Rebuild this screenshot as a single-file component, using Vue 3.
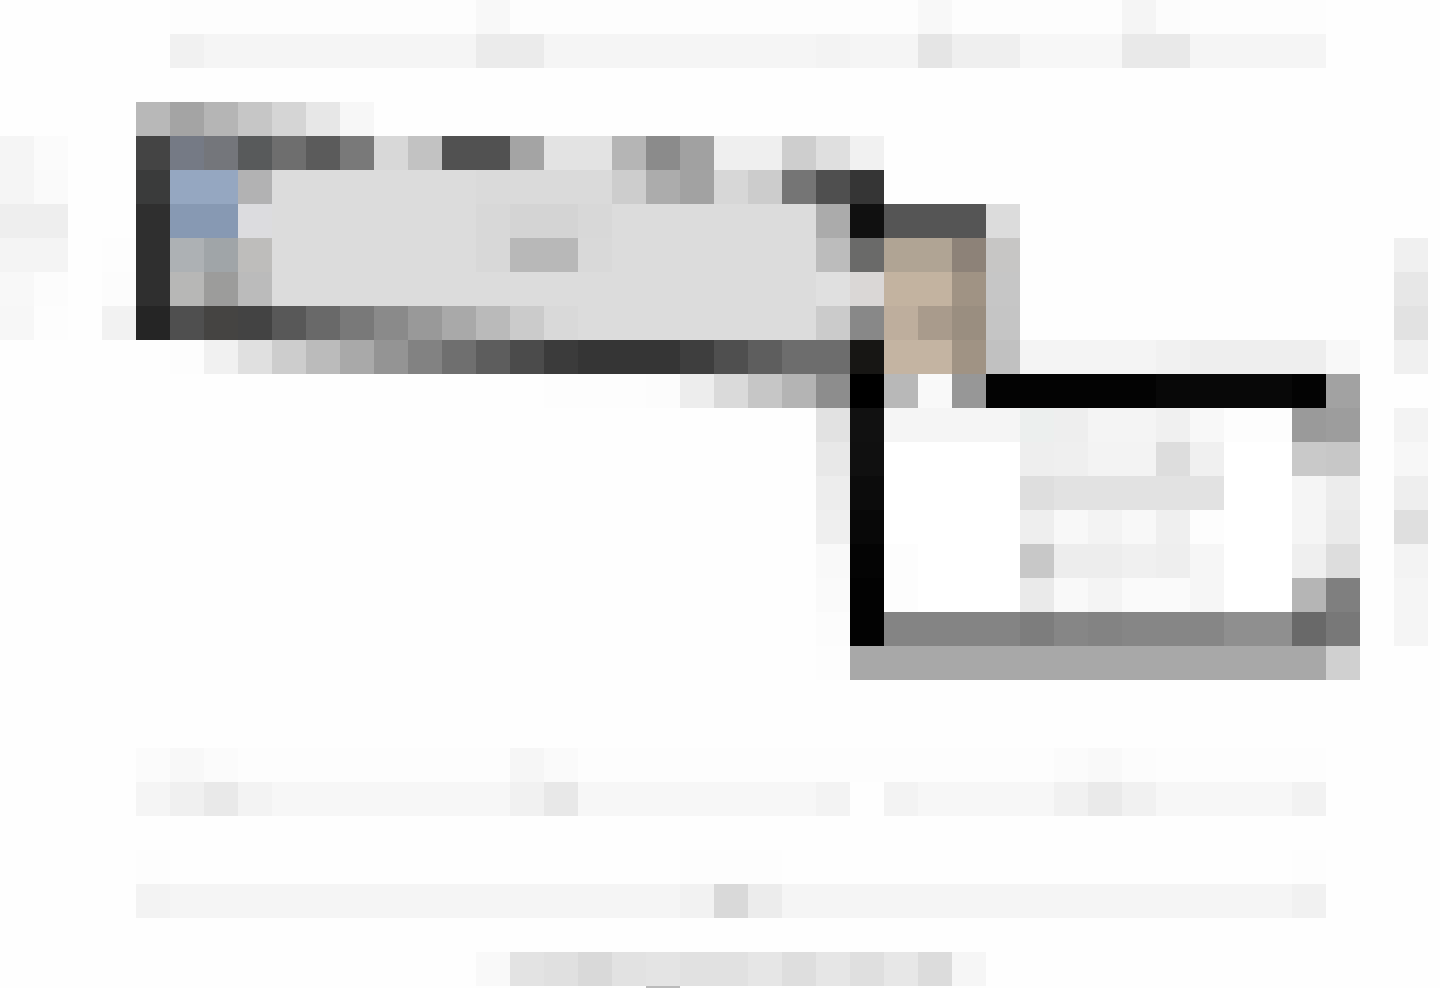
<script setup>
const CELL = 34

// Each row lists "column[-lastColumn]:shade"; a two-digit shade is a grey.
const rows = {
  0: '5-13:fd 14:f8 15-26:fd 27:f8 28-32:fd 33:f5 34:fc 35-38:fd',
  1: '5:f1 6-13:f5 14-15:eb 16-23:f5 24:f3 25-26:f5 27:e5 28-29:ef 30-32:f7 33-34:e9 35-38:f5',
  3: '4:b8 5:a4 6:b5 7:c6 8:d5 9:e7 10:f7',
  4: '0:f5 1:fb 4:44 5:757a85 6:74767b 7:585a5b 8:6e 9:5b 10:79 11:d8 12:c2 13-14:51 15:a4 16-17:e3 18:b5 19:8b 20:a1 21-22:ef 23:ce 24:df 25:f1',
  5: '0:f5 1:fa 4:3a3b3b 5-6:95a7c1 7:b2b2b3 8-13:dc 14-17:da 18:cd 19:ac 20:a2 21:d7 22:cc 23:75 24:4f 25:35',
  6: '0-1:ee 4:2f 5-6:8799b3 7:dcdcdf 8-13:dc 14:d8 15-16:d4 17:d8 18-23:dc 24:ab 25:10 26-28:55 29:dc',
  7: '0-1:f4 3:fd 4:2f 5:adb1b4 6:a0a5a8 7:bebdbb 8-13:dc 14:d8 15-16:b8 17:d9 18-23:dc 24:bc 25:6a6a69 26-27:b0a494 28:8d8278 29:c7c6c5 41:f0',
  8: '0:f8 1:fc 3:fc 4:2f 5:b7b7b6 6:9c9c9b 7:bb 8-23:dc 24:e0 25:dad7d6 26-27:c3b3a0 28:a09384 29:c6 41:e7',
  9: '0:f7 1:fd 3:f2 4:25 5:4f 6:454442 7:43 8:58 9:69 10:79 11:8a 12:99 13:a9 14:ba 15:cb 16:d9 17-23:dc 24:cb 25:88 26:beae9d 27:a99b8c 28:9a8e80 29:c5 41:e2',
  10: '5:fd 6:f1 7:e0 8:cd 9:bb 10:a9 11:94 12:82 13:6f 14:5d 15:4b 16:3b 17-19:35 20:3e 21:4f 22:5e 23-24:6d 25:171614 26-27:c4b4a2 28:a09384 29:c1 30-33:f4 34:f1 35-38:ee 39:f8 41:f0',
  11: '16-18:fd 19:fc 20:ed 21:da 22:c6 23:b4 24:8d 25:00 26:b8 27:f9 28:97 29-33:03 34-37:08 38:03 39:a2',
  12: '24:e2 25:11 26-29:f5 30:ecefee 31:ee 32-33:f4 34:f0 35:f8 36-37:fd 38:9a 39:9d 41:f3',
  13: '24:e8 25:10 26-29:ff 30:ee 31:ef 32-33:f3 34:dd 35:f0 36-37:ff 38:c9 39:c7 41:f7',
  14: '24:ed 25:0c 26-29:ff 30:de 31-35:e2 36-37:ff 38:f5 39:ec 41:ee',
  15: '24:ef 25:08 26-29:ff 30:ee 31:f8 32:f3 33:f8 34:ef 35:fd 36-37:ff 38:f5 39:ea 41:df',
  16: '24:f9 25:04 26:fd 27-29:ff 30:c8 31-32:ed 33:f0 34:ee 35:f6 36-37:ff 38:ef 39:dd 41:f3',
  17: '24:fa 25:02 26:fd 27-29:ff 30:ea 31:f9 32:f4 33-34:fa 35:f6 36-37:ff 38:b5 39:7f 41:f5',
  18: '24:fc 25:02 26-29:84 30:7d 31:86 32:83 33-35:86 36-37:8f 38:69 39:78 41:f5',
  19: '24:fd 25-38:a8 39:d0',
  22: '4:fb 5:f8 6:fb 7-14:fd 15:f6 16:fa 17-30:fd 31:fb 32:f9 33:fc 34-38:fd',
  23: '4:f5 5:f0 6:e9 7:f3 8-14:f7 15:f1 16:e8 17-23:f7 24:f3 26:f3 27-30:f7 31:f1 32:ea 33:f1 34-37:f7 38:f2',
  25: '4:fd 20-22:fd 38:fd',
  26: '4:f3 5-19:f5 20:f2 21:d9 22:ec 23-37:f5 38:f1',
  28: '14:f9 15:e3 16:e0 17:d9 18:e2 19:e4 20-21:e1 22:e6 23:de 24:e6 25:df 26:e7 27:dc 28:f6',
  29: '19:bb',
}

const blocks = Object.entries(rows).flatMap(([row, line]) =>
  line.split(' ').map((item) => {
    const [range, shade] = item.split(':')
    const [first, last = first] = range.split('-').map(Number)
    return {
      key: `${row}-${first}`,
      x: first * CELL,
      y: row * CELL,
      width: (last - first + 1) * CELL,
      fill: '#' + (shade.length === 2 ? shade.repeat(3) : shade),
    }
  }),
)
</script>

<template>
  <main class="page">
    <svg class="plan" viewBox="0 0 1440 988" role="img" aria-label="Floor plan" shape-rendering="crispEdges">
      <rect
        v-for="block in blocks"
        :key="block.key"
        :x="block.x"
        :y="block.y"
        :width="block.width"
        :height="CELL"
        :fill="block.fill"
      />
    </svg>
  </main>
</template>

<style scoped>
.page {
  background: #fefefe;
}

.plan {
  display: block;
  width: 100%;
  height: auto;
}
</style>

<style>
body {
  margin: 0;
  background: #fefefe;
}
</style>
